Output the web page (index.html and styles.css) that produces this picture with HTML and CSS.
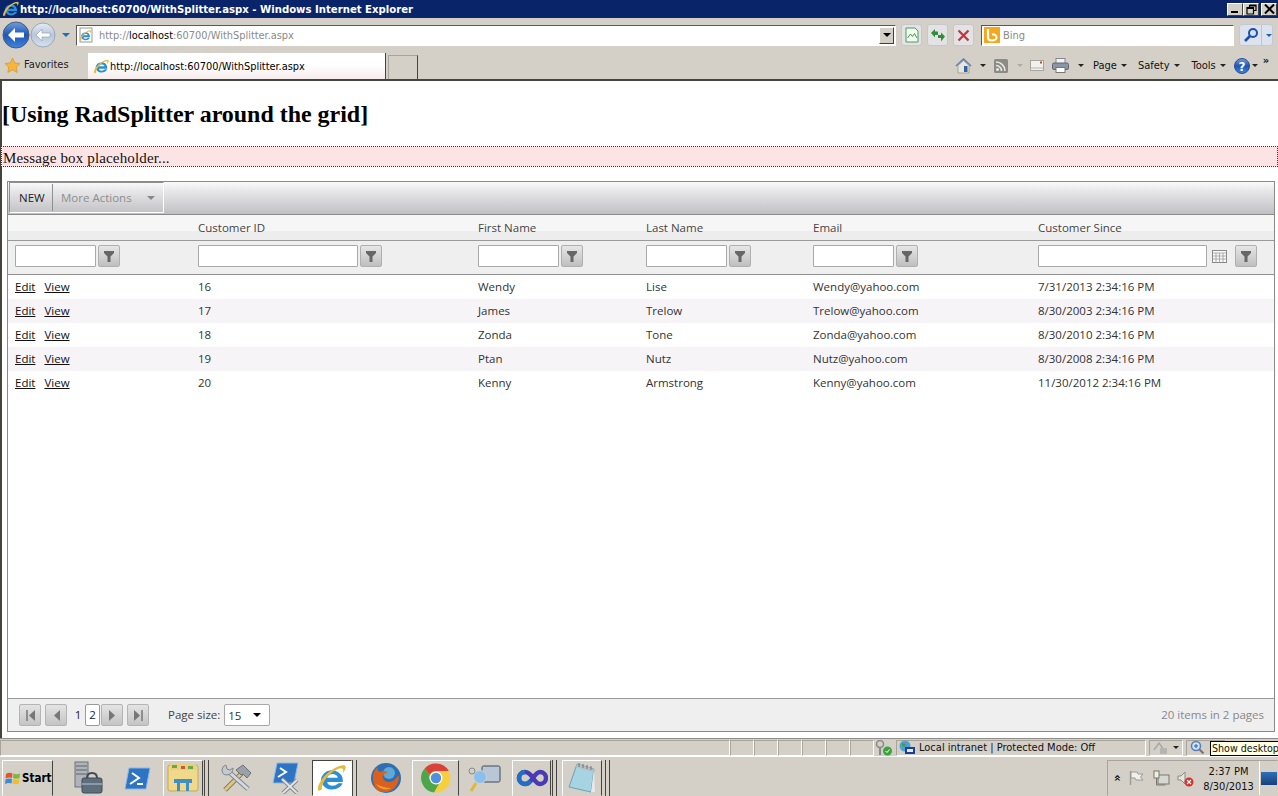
FILE: index.html
```html
<!DOCTYPE html>
<html lang="en">
<head>
  <meta charset="UTF-8">
  <title>WithSplitter</title>
  <link rel="stylesheet" href="styles.css">
</head>
<body>
  <svg class="defs" width="0" height="0">
    <defs>
      <linearGradient id="blueBall" x1="0" y1="0" x2="0" y2="1"><stop offset="0" stop-color="#6f9fe0"/><stop offset="0.5" stop-color="#1f55b5"/><stop offset="1" stop-color="#3f86dc"/></linearGradient>
      <linearGradient id="greyBall" x1="0" y1="0" x2="0" y2="1"><stop offset="0" stop-color="#e6ebf2"/><stop offset="0.5" stop-color="#b9c6da"/><stop offset="1" stop-color="#d7e2ef"/></linearGradient>
      <symbol id="ie" viewBox="0 0 20 20">
        <path d="M3 11.500a7 7 0 0 1 13.600-1.600l.2 2.600H7c.2 2.600 4.600 3.300 7 .8h2.600c-2 5-10.800 5.500-13-.4z M7 9.800h6.600c-.5-3-6-3-6.600 0z" fill="#2b8fd8" fill-rule="evenodd"/>
        <path d="M1.500 18c-1.500-3 3-10 9-13.500 4-2.400 7.500-3.300 8-1.700.4 1.300-1 3.200-2 4.500.5-1.500 1-3-.3-3.300-2-.4-7 2.500-10 6.500-2.200 3-3 5.800-2.300 6.500-.8.500-2 .8-2.400 1z" fill="#e4b93c"/>
      </symbol>
      <symbol id="funnel" viewBox="0 0 10 11">
        <path d="M0 0h10v2L6.500 5.500V11h-3V5.500L0 2z" fill="#666"/>
      </symbol>
    </defs>
  </svg>

  <header class="chrome">
    <div class="titlebar">
      <svg class="title-ie" width="18" height="18"><use href="#ie"/></svg>
      <span class="title-text">http://localhost:60700/WithSplitter.aspx - Windows Internet Explorer</span>
      <div class="win-btns">
        <span class="win-btn"><i class="min-glyph"></i></span>
        <span class="win-btn"><svg width="11" height="11" viewBox="0 0 11 11"><path d="M3.500 1h6.500v5.500H8M3.500 1v2M1 3.500h6.500v6.500H1z M1 4.500h6.500 M3.500 2h6.500" fill="none" stroke="#000" stroke-width="1.200"/></svg></span>
        <span class="win-btn win-btn-x"><svg width="11" height="10" viewBox="0 0 11 10"><path d="M1 .5l9 9M10 .5l-9 9" stroke="#000" stroke-width="2"/></svg></span>
      </div>
    </div>

    <div class="navbar">
      <svg class="nav-balls" width="72" height="30" viewBox="0 0 72 30">
        <circle cx="42" cy="15" r="12" fill="url(#greyBall)" stroke="#9aa7b8"/>
        <path d="M35 15l6-6v4h8v4h-8v4z" fill="#fff" stroke="#8fa0b8" stroke-width=".7"/>
        <circle cx="15" cy="15" r="13" fill="url(#blueBall)" stroke="#4a5a78"/>
        <path d="M7 15l7-7v4.500h9v5h-9V22z" fill="#fff"/>
        <path d="M61 13h8l-4 4z" fill="#1f6fb5"/>
      </svg>
      <div class="address">
        <svg class="addr-icon" width="16" height="16"><rect x="2" y="1" width="12" height="14" fill="#fff" stroke="#999"/><use href="#ie" x="1" y="2" width="13" height="13"/></svg>
        <span class="addr-url">http://<b>localhost</b>:60700/WithSplitter.aspx</span>
        <span class="addr-drop"><i class="tri"></i></span>
      </div>
      <span class="nav-btn"><svg width="14" height="16" viewBox="0 0 14 16"><path d="M1 1h9l3 3v11H1z" fill="#f4fbf2" stroke="#4d9a55"/><path d="M2.500 11l3-4 2 2.500 2-3 2.500 4.500" fill="none" stroke="#3e9a4a"/></svg></span>
      <span class="nav-btn"><svg width="16" height="14" viewBox="0 0 16 14"><path d="M1 5l4-4v2.500h3V7H5v2.500z" fill="#2f8f35"/><path d="M15 8l-4-4v2.500H8v3h3V13z" fill="#2f8f35" transform="translate(0 .5)"/></svg></span>
      <span class="nav-btn"><svg width="13" height="13" viewBox="0 0 13 13"><path d="M1.500 1.500l10 10M11.500 1.500l-10 10" stroke="#c8373f" stroke-width="2.400"/></svg></span>
      <div class="search">
        <svg class="bing" width="16" height="16" viewBox="0 0 16 16"><rect width="16" height="16" fill="#f4a81c"/><path d="M4 2v8.500c0 2 2 3 4 3s4.500-1.200 4.500-3.300S10 7 8 7.500" fill="none" stroke="#fff" stroke-width="2.200"/></svg>
        <span class="search-text">Bing</span>
      </div>
      <span class="search-go">
        <svg width="16" height="16" viewBox="0 0 16 16"><circle cx="10" cy="6" r="4" fill="#cfe2fa" stroke="#1d4fa8" stroke-width="2"/><path d="M7 9l-5 5" stroke="#1d4fa8" stroke-width="2.600"/></svg>
        <i class="search-sep"></i>
        <i class="tri tri-blue"></i>
      </span>
    </div>

    <div class="tabbar">
      <svg class="star" width="17" height="17" viewBox="0 0 17 17"><path d="M8.500 1l2.300 4.900 5.200.7-3.800 3.600 1 5.300-4.700-2.600-4.700 2.600 1-5.300L1 6.600l5.200-.7z" fill="#f4b73a" stroke="#d8912a" stroke-width=".7"/></svg>
      <span class="fav-label">Favorites</span>
      <div class="tab">
        <svg width="17" height="17"><use href="#ie"/></svg>
        <span>http://localhost:60700/WithSplitter.aspx</span>
      </div>
      <div class="tab-new"></div>
      <div class="cmdbar">
        <svg class="cmd-home" width="17" height="17" viewBox="0 0 17 17"><path d="M1 9l7.500-7L16 9" fill="none" stroke="#5d7fae" stroke-width="1.600"/><path d="M3 8.500V16h11V8.500L8.500 3.500z" fill="#e8e6dc" stroke="#8a8a80" stroke-width=".7"/><rect x="9" y="9" width="3.500" height="6" fill="#2f62a8"/></svg>
        <i class="tri tri-s cmd-t1"></i>
        <svg class="cmd-rss" width="14" height="14" viewBox="0 0 14 14"><rect width="14" height="14" rx="1.500" fill="#8b8b85"/><circle cx="3.500" cy="10.500" r="1.500" fill="#e8e8e2"/><path d="M2 6.500a5.500 5.500 0 0 1 5.500 5.500M2 3a9 9 0 0 1 9 9" fill="none" stroke="#e8e8e2" stroke-width="1.600"/></svg>
        <i class="tri tri-s tri-faint cmd-t2"></i>
        <svg class="cmd-mail" width="14" height="11" viewBox="0 0 14 11"><rect x=".5" y=".5" width="13" height="10" fill="#f1f0ec" stroke="#a5a5a0"/><path d="M1 8h12" stroke="#b5b5b0"/><rect x="10" y="1.500" width="2" height="2" fill="#b5474a"/></svg>
        <svg class="cmd-print" width="17" height="15" viewBox="0 0 17 15"><rect x="4" y="0.500" width="9" height="6" fill="#f3f3f3" stroke="#888"/><rect x=".5" y="5" width="16" height="6.500" rx="1.500" fill="#8c95a3" stroke="#5f6772"/><rect x="4" y="9.500" width="9" height="5" fill="#fff" stroke="#777"/></svg>
        <i class="tri tri-s cmd-t3"></i>
        <span class="cmd-item cmd-page">Page <i class="tri tri-s"></i></span>
        <span class="cmd-item cmd-safety">Safety <i class="tri tri-s"></i></span>
        <span class="cmd-item cmd-tools">Tools <i class="tri tri-s"></i></span>
        <svg class="cmd-help" width="16" height="16" viewBox="0 0 16 16"><circle cx="8" cy="8" r="7.500" fill="url(#blueBall)" stroke="#2d4c8e"/><text x="8" y="12.500" text-anchor="middle" class="help-q">?</text></svg>
        <i class="tri tri-s cmd-t4"></i>
        <span class="cmd-more">»</span>
      </div>
    </div>
  </header>

  <main class="page">
    <h2 class="page-title">[Using RadSplitter around the grid]</h2>
    <div class="msgbox">Message box placeholder...</div>

    <section class="grid">
      <div class="grid-toolbar">
        <div class="tb-group">
          <span class="tb-new">NEW</span>
          <span class="tb-more">More Actions <i class="tri tri-grey"></i></span>
        </div>
      </div>

      <table class="grid-table">
        <colgroup>
          <col class="c0"><col class="c1"><col class="c2"><col class="c3"><col class="c4"><col class="c5">
        </colgroup>
        <thead>
          <tr class="head-row">
            <th></th><th>Customer ID</th><th>First Name</th><th>Last Name</th><th>Email</th><th>Customer Since</th>
          </tr>
          <tr class="filter-row">
            <td><div class="filter"><span class="f-input f-81"></span><span class="f-btn"><svg width="10" height="11"><use href="#funnel"/></svg></span></div></td>
            <td><div class="filter"><span class="f-input f-160"></span><span class="f-btn"><svg width="10" height="11"><use href="#funnel"/></svg></span></div></td>
            <td><div class="filter"><span class="f-input f-81"></span><span class="f-btn"><svg width="10" height="11"><use href="#funnel"/></svg></span></div></td>
            <td><div class="filter"><span class="f-input f-81"></span><span class="f-btn"><svg width="10" height="11"><use href="#funnel"/></svg></span></div></td>
            <td><div class="filter"><span class="f-input f-81"></span><span class="f-btn"><svg width="10" height="11"><use href="#funnel"/></svg></span></div></td>
            <td><div class="filter"><span class="f-input f-169"></span>
              <svg class="cal" width="15" height="13" viewBox="0 0 15 13"><rect x=".5" y=".5" width="14" height="12" fill="#fafafa" stroke="#8a8a8a"/><path d="M.5 3h14M.5 6h14M.5 9h14M4 3v9M7.500 3v9M11 3v9" stroke="#9a9a9a" stroke-width=".8"/></svg>
              <span class="f-btn"><svg width="10" height="11"><use href="#funnel"/></svg></span></div></td>
          </tr>
        </thead>
        <tbody>
          <tr><td><a href="#">Edit</a><a href="#">View</a></td><td>16</td><td>Wendy</td><td>Lise</td><td>Wendy@yahoo.com</td><td>7/31/2013 2:34:16 PM</td></tr>
          <tr class="alt"><td><a href="#">Edit</a><a href="#">View</a></td><td>17</td><td>James</td><td>Trelow</td><td>Trelow@yahoo.com</td><td>8/30/2003 2:34:16 PM</td></tr>
          <tr><td><a href="#">Edit</a><a href="#">View</a></td><td>18</td><td>Zonda</td><td>Tone</td><td>Zonda@yahoo.com</td><td>8/30/2010 2:34:16 PM</td></tr>
          <tr class="alt"><td><a href="#">Edit</a><a href="#">View</a></td><td>19</td><td>Ptan</td><td>Nutz</td><td>Nutz@yahoo.com</td><td>8/30/2008 2:34:16 PM</td></tr>
          <tr><td><a href="#">Edit</a><a href="#">View</a></td><td>20</td><td>Kenny</td><td>Armstrong</td><td>Kenny@yahoo.com</td><td>11/30/2012 2:34:16 PM</td></tr>
        </tbody>
      </table>

      <div class="pager">
        <span class="p-btn"><svg width="9" height="11" viewBox="0 0 9 11"><path d="M1 0v11" stroke="#777" stroke-width="1.500"/><path d="M9 0v11L3 5.500z" fill="#777"/></svg></span>
        <span class="p-btn"><svg width="7" height="11" viewBox="0 0 7 11"><path d="M7 0v11L1 5.500z" fill="#777"/></svg></span>
        <span class="p-num">1</span>
        <span class="p-num p-cur">2</span>
        <span class="p-btn p-next"><svg width="7" height="11" viewBox="0 0 7 11"><path d="M0 0v11l6-5.500z" fill="#777"/></svg></span>
        <span class="p-btn"><svg width="9" height="11" viewBox="0 0 9 11"><path d="M0 0v11l6-5.500z" fill="#777"/><path d="M8 0v11" stroke="#777" stroke-width="1.500"/></svg></span>
        <span class="p-size-label">Page size:</span>
        <span class="p-select">15<i class="tri"></i></span>
        <span class="p-info">20 items in 2 pages</span>
      </div>
    </section>
  </main>

  <div class="statusbar">
    <span class="st-cell st-spacer"></span>
    <span class="st-cell st-s"></span><span class="st-cell st-s"></span><span class="st-cell st-s"></span><span class="st-cell st-s"></span><span class="st-cell st-s"></span><span class="st-cell st-s"></span>
    <svg class="st-key" width="18" height="16" viewBox="0 0 18 16"><circle cx="5" cy="4" r="3.500" fill="none" stroke="#888" stroke-width="1.500"/><path d="M5 7v8" stroke="#888" stroke-width="2"/><circle cx="12.500" cy="11" r="4.500" fill="#3aa53a"/><path d="M10.500 11l1.500 1.500 2.500-3" fill="none" stroke="#fff"/></svg>
    <span class="st-cell st-zone">
      <svg width="17" height="16" viewBox="0 0 17 16"><circle cx="6" cy="6" r="5.500" fill="#4fa0d8"/><path d="M3 3l4 1-1 3-3-1z" fill="#4c9a4a"/><rect x="6" y="7" width="10" height="7" fill="#1f3f90"/><rect x="8" y="9" width="6" height="3" fill="#dfe8f4"/></svg>
      Local intranet | Protected Mode: Off
    </span>
    <span class="st-cell st-lock">
      <svg width="16" height="14" viewBox="0 0 16 14"><path d="M1 9l5-7 5 7" fill="none" stroke="#a8a8a8" stroke-width="1.500"/><rect x="7" y="7" width="7" height="6" fill="#b5b5b0"/></svg>
      <i class="tri tri-s"></i>
    </span>
    <span class="st-cell st-zoom">
      <svg width="15" height="15" viewBox="0 0 15 15"><circle cx="6" cy="6" r="4.500" fill="#cfe2fa" stroke="#4f7fbf" stroke-width="1.500"/><path d="M4 6h4M6 4v4" stroke="#2a5fa8"/><path d="M9.500 9.500l4 4" stroke="#7a7468" stroke-width="2"/></svg>
    </span>
    <span class="tooltip">Show desktop</span>
  </div>

  <footer class="taskbar">
    <span class="start">
      <svg width="16" height="15" viewBox="0 0 16 15"><path d="M1 3q3-2 6.500-.5L7 7Q4 6 .5 7.500z" fill="#e2552c"/><path d="M8.500 2.500q3 1.300 6.500 0L14.500 7q-3.500 1.300-6.500 0z" fill="#7cb83c"/><path d="M.5 8.500Q4 7 7 8l-.5 4.500q-3-1-6.500.500z" fill="#3a8ad8"/><path d="M8 8q3 1.300 6.500 0L14 12.500q-3.500 1.300-6.500 0z" fill="#f2bd2c"/></svg>
      <b>Start</b>
    </span>

    <span class="task t-server">
      <svg width="30" height="34" viewBox="0 0 30 34"><rect x="2" y="1" width="13" height="25" fill="#aeb4ba" stroke="#6d7378"/><path d="M3 5h11M3 9h11M3 13h11" stroke="#5d6368"/><rect x="9" y="17" width="20" height="15" rx="2" fill="#5e6e7c" stroke="#3e4a55"/><path d="M14 17q0-5 5-5t5 5" fill="none" stroke="#3e4a55" stroke-width="2"/><path d="M9 23h20" stroke="#8c9aa6" stroke-width="2"/></svg>
    </span>
    <span class="task t-ps">
      <svg width="27" height="23" viewBox="0 0 27 23"><path d="M5 1h21l-4 21H1z" fill="#2d74c4" stroke="#8cb8e4"/><path d="M8 6l7 5-9 6M13 17h6" fill="none" stroke="#fff" stroke-width="2"/></svg>
    </span>
    <span class="task t-folder t-open">
      <svg width="32" height="30" viewBox="0 0 32 30"><rect x="1" y="2" width="30" height="26" rx="2" fill="#f0d98a" stroke="#c8a850"/><rect x="3" y="1" width="26" height="6" fill="#e9cf7e"/><rect x="5" y="2" width="5" height="3" fill="#6aa84f"/><rect x="14" y="3" width="4" height="3" fill="#c65b3a"/><rect x="21" y="3" width="5" height="3" fill="#6aa84f"/><rect x="7" y="16" width="18" height="4" fill="#3f90c4"/><rect x="10" y="20" width="3" height="8" fill="#3f90c4"/><rect x="19" y="20" width="3" height="8" fill="#3f90c4"/></svg>
    </span>
    <i class="grip"></i>
    <span class="task t-tools">
      <svg width="31" height="28" viewBox="0 0 31 28"><path d="M4 26L21 9" stroke="#8f7d45" stroke-width="5"/><path d="M4 26L21 9" stroke="#d8c68c" stroke-width="3"/><path d="M15 6l7-5 8 8-4 5-4-4-2 1z" fill="#9aa2a8" stroke="#6a7278"/><path d="M8 8l19 17" stroke="#7f878d" stroke-width="5"/><path d="M8 8l19 17" stroke="#d4d9dd" stroke-width="3"/><path d="M1 6q0-4 4-5l1 4 3 1 3-2q0 6-6 7Q1 11 1 6z" fill="#c4cbd0" stroke="#7f878d"/></svg>
    </span>
    <span class="task t-pstool">
      <svg width="30" height="32" viewBox="0 0 30 32"><path d="M6 1h21l-4 20H2z" fill="#2d74c4" stroke="#8cb8e4"/><path d="M9 6l6 4-8 5" fill="none" stroke="#fff" stroke-width="2"/><path d="M11 17l15 14M26 18L12 31" stroke="#7f878d" stroke-width="4"/><path d="M11 17l15 14M26 18L12 31" stroke="#dfe3e6" stroke-width="2"/></svg>
    </span>
    <span class="task t-ie t-active">
      <svg width="32" height="32"><use href="#ie"/></svg>
    </span>
    <i class="grip grip-2"></i>
    <span class="task t-ff">
      <svg width="32" height="32" viewBox="0 0 32 32"><circle cx="16" cy="16" r="15" fill="#2d6fb0"/><circle cx="19" cy="11" r="6" fill="#5fa8d8"/><path d="M3 18c-1-6 2-11 5-13-1 3 0 4 2 5 3-2 6-1 8 1-4 0-6 2-5 5 1 4 6 5 10 3 3-2 4-5 6-5 0 9-6 16-14 16S4 26 3 18z" fill="#d9601e"/><path d="M6 22c3 5 10 7 15 4-6 0-11-2-15-4z" fill="#f0a030"/></svg>
    </span>
    <span class="task t-chrome t-open">
      <svg width="30" height="30" viewBox="0 0 30 30"><circle cx="15" cy="15" r="14.500" fill="#f6cf3d"/><path d="M15 .5A14.500 14.500 0 0 1 27.800 8H15a7 7 0 0 0-6.300 4L3.700 5.500A14.500 14.500 0 0 1 15 .5z" fill="#d9423a"/><path d="M3.700 5.500A14.500 14.500 0 0 0 13 29.400l5-8.800a7 7 0 0 1-9.300-8.600z" fill="#4ca64a"/><circle cx="15" cy="15" r="6.500" fill="#fff"/><circle cx="15" cy="15" r="5.200" fill="#4f8fdc"/></svg>
    </span>
    <span class="task t-mag">
      <svg width="33" height="30" viewBox="0 0 33 30"><rect x="14" y="3" width="18" height="16" rx="1.500" fill="#b9c6d6" stroke="#3d4a58"/><circle cx="12" cy="14" r="6.500" fill="#8cc0ea" stroke="#c6d4e0"/><circle cx="4" cy="8" r="3" fill="none" stroke="#888"/><path d="M8 20l-5 8" stroke="#e0b838" stroke-width="3"/></svg>
    </span>
    <span class="task t-vs t-open">
      <svg width="32" height="18" viewBox="0 0 32 18"><path d="M9 3c4 0 6 3 8 6s4 6 7 6a6 6 0 0 0 0-12c-3 0-5 3-7 6s-4 6-8 6A6 6 0 0 1 9 3z" fill="none" stroke="#4a3ab4" stroke-width="4.500"/><path d="M9 3a6 6 0 0 0 0 12c2 0 4-1 5.500-3" fill="none" stroke="#1f6fc4" stroke-width="4.500"/></svg>
    </span>
    <i class="grip"></i>
    <span class="task t-note t-open">
      <svg width="30" height="32" viewBox="0 0 30 32"><path d="M10 2l17 5-3 23L2 25z" fill="#a6d4e2" stroke="#6aa2b8"/><path d="M10 2l17 5-1 3L9 5z" fill="#b9bec0"/><path d="M12 1v4M16 2v4M20 3v4M24 4v4" stroke="#6f7578"/><path d="M24 30l3-23 1 23z" fill="#e8eaea"/></svg>
    </span>
    <i class="grip grip-3"></i>

    <div class="tray">
      <span class="tray-up">»</span>
      <svg class="tray-flag" width="15" height="16" viewBox="0 0 15 16"><path d="M1.500 1v14" stroke="#9a9a94" stroke-width="1.400"/><path d="M2 2h6l1 2h5l-2.500 3 2.500 3H7L6 8H2z" fill="#f0efea" stroke="#9a9a94"/></svg>
      <svg class="tray-net" width="17" height="17" viewBox="0 0 17 17"><rect x="5" y="5" width="11" height="9" fill="#d8d8d2" stroke="#77776f"/><rect x="1" y="1" width="5" height="7" fill="#efefe8" stroke="#77776f"/><path d="M3.500 8v7h9" fill="none" stroke="#77776f"/></svg>
      <svg class="tray-vol" width="17" height="17" viewBox="0 0 17 17"><path d="M1 6h3l4-4v12l-4-4H1z" fill="#e6e6df" stroke="#8a8a84"/><circle cx="12" cy="12" r="4.500" fill="#d8302c"/><path d="M10 10l4 4M14 10l-4 4" stroke="#fff" stroke-width="1.200"/></svg>
      <span class="clock">2:37 PM<br>8/30/2013</span>
      <span class="show-desk"><i></i></span>
    </div>
  </footer>
</body>
</html>
```

FILE: styles.css
```css
/* Base */
*, *::before, *::after {
  box-sizing: border-box;
}
html, body {
  height: 100%;
}
body {
  margin: 0;
  width: 1278px;
  height: 796px;
  overflow: hidden;
  display: flex;
  flex-direction: column;
  background: #fff;
  font-family: "DejaVu Sans Condensed", "DejaVu Sans", sans-serif;
  font-size: 11px;
  position: relative;
}
.defs {
  position: absolute;
}
svg {
  flex: none;
  display: block;
}
i {
  display: block;
}
/* little dropdown triangle */
.tri {
  width: 0;
  height: 0;
  border-style: solid;
  border-width: 4px 4.5px 0;
  border-color: #000 transparent transparent;
}
.tri-s {
  border-width: 3px 3.5px 0;
  border-top-color: #222;
}
.tri-faint {
  border-top-color: #aaa;
}
.tri-blue {
  border-top-color: #1f5fb0;
  border-width: 3px 3.5px 0;
}
.tri-grey {
  display: inline-block;
  border-top-color: #888;
  margin-left: 12px;
  vertical-align: 2px;
}

/* IE window chrome */
.chrome {
  flex: none;
  height: 81px;
  background: #d4d0c8;
  border-bottom: 2px solid #45433e;
}
.titlebar {
  height: 18px;
  background: #0a246a;
  display: flex;
  align-items: center;
  color: #fff;
  font-weight: bold;
  font-size: 11.25px;
}
.title-ie {
  margin-left: 2px;
}
.title-text {
  flex: 1;
  white-space: nowrap;
}
.win-btns {
  display: flex;
  gap: 0;
  margin-right: 1px;
}
.win-btn {
  width: 16px;
  height: 13px;
  background: #d4d0c8;
  border: 1px solid #fff;
  border-right-color: #404040;
  border-bottom-color: #404040;
  display: flex;
  align-items: center;
  justify-content: center;
}
.win-btn-x {
  margin-left: 2px;
}
.min-glyph {
  width: 7px;
  height: 2px;
  background: #000;
  margin-top: 6px;
  margin-right: 2px;
}
.navbar {
  height: 34px;
  display: flex;
  align-items: center;
  position: relative;
  padding-left: 1px;
}
.nav-balls {
  margin-right: 3px;
}
.address {
  width: 820px;
  height: 21px;
  background: #fff;
  border: 1px solid;
  border-color: #5a5a55 #fff #fff #5a5a55;
  display: flex;
  align-items: center;
  padding-left: 1px;
  color: #8a8a8a;
}
.addr-icon {
  margin-right: 5px;
}
.addr-url {
  flex: 1;
  font-size: 10.9px;
}
.addr-url b {
  font-weight: normal;
  color: #000;
}
.addr-drop {
  width: 15px;
  height: 17px;
  margin-right: 1px;
  background: #d4d0c8;
  border: 1px solid;
  border-color: #fff #404040 #404040 #fff;
  display: flex;
  align-items: center;
  justify-content: center;
}
.nav-btn {
  width: 21px;
  height: 22px;
  margin-left: 5px;
  background: #e3e3e6;
  border: 1px solid #c6c6cc;
  border-radius: 3px;
  display: flex;
  align-items: center;
  justify-content: center;
}
.search {
  width: 253px;
  height: 21px;
  margin-left: 7px;
  background: #fff;
  border: 1px solid;
  border-color: #5a5a55 #fff #fff #5a5a55;
  display: flex;
  align-items: center;
  padding-left: 2px;
  color: #8a8a8a;
}
.bing {
  margin-right: 3px;
}
.search-go {
  width: 34px;
  height: 22px;
  margin-left: 5px;
  background: #dde3ee;
  border: 1px solid #c6c8d0;
  border-radius: 3px;
  display: flex;
  align-items: center;
  padding-left: 3px;
}
.search-sep {
  width: 1px;
  height: 20px;
  background: #c0c4d0;
  margin: 0 4px 0 2px;
}
.tabbar {
  height: 27px;
  display: flex;
  align-items: flex-end;
  position: relative;
}
.star {
  align-self: center;
  margin: 0 3px 0 4px;
}
.fav-label {
  align-self: center;
  width: 64px;
  margin-top: -2px;
  color: #222;
}
.tab {
  width: 298px;
  height: 26px;
  background: linear-gradient(#fff 0, #fff 45%, #f6ecec 100%);
  border-right: 1px solid #45433e;
  display: flex;
  align-items: center;
  padding-left: 5px;
  font-size: 10.9px;
  color: #000;
}
.tab-new {
  width: 30px;
  height: 24px;
  margin-left: 2px;
  border: 1px solid #a8a49c;
  border-bottom: 0;
  border-right: 1px solid #45433e;
  background: #d4d0c8;
}
.cmdbar {
  flex: 1;
  height: 27px;
  display: flex;
  align-items: center;
  color: #111;
  position: relative;
}
.cmd-home {
  margin-left: 537px;
}
.cmd-t1 {
  margin-left: 8px;
}
.cmd-rss {
  margin-left: 8px;
}
.cmd-t2 {
  margin-left: 9px;
}
.cmd-mail {
  margin-left: 7px;
}
.cmd-print {
  margin-left: 8px;
}
.cmd-t3 {
  margin-left: 9px;
}
.cmd-item {
  display: flex;
  align-items: center;
  gap: 4px;
}
.cmd-page {
  margin-left: 9px;
}
.cmd-safety {
  margin-left: 11px;
}
.cmd-tools {
  margin-left: 12px;
}
.cmd-help {
  margin-left: 8px;
}
.cmd-t4 {
  margin-left: 2px;
}
.cmd-more {
  margin-left: 5px;
  margin-top: -10px;
  font-weight: bold;
}
.help-q {
  font: bold 12px "DejaVu Sans", sans-serif;
  fill: #fff;
}

/* Page content */
.page {
  flex: none;
  height: 657px;
  border-left: 2px solid #45433e;
  display: flex;
  flex-direction: column;
  font-family: "Liberation Serif", serif;
  background: #fff;
}
.page-title {
  margin: 0 0 0 -1px;
  padding: 19px 0 0 1px;
  height: 65px;
  font-size: 24px;
  line-height: 28px;
  font-weight: bold;
  letter-spacing: -0.03px;
  color: #000;
}
.msgbox {
  height: 21px;
  margin-left: -1px;
  padding: 2px 0 0 1px;
  background: #fde4e4;
  border: 1px dotted #8a1030;
  font-size: 15px;
  line-height: 18px;
  letter-spacing: 0.15px;
  color: #111;
}

/* Grid */
.grid {
  flex: none;
  height: 551px;
  margin: 14px 3px 0 5px;
  border: 1px solid #8a8a8a;
  display: flex;
  flex-direction: column;
  font-family: "Open Sans", sans-serif;
  font-size: 11.5px;
  color: #333;
}
.grid-toolbar {
  flex: none;
  height: 33px;
  background: linear-gradient(#fafafa 0, #e6e6e8 30%, #c0c0c4 100%);
  border-bottom: 1px solid #8a8a8a;
}
.tb-group {
  width: 155px;
  height: 31px;
  margin: 0 0 0 1px;
  border: 1px solid #8f8f8f;
  border-right-color: #fff;
  border-bottom-color: #fff;
  display: flex;
  align-items: center;
}
.tb-new {
  width: 43px;
  padding-left: 9px;
  color: #222;
  border-right: 1px solid #8f8f8f;
  line-height: 27px;
}
.tb-more {
  padding-left: 8px;
  color: #8e8e8e;
}
.grid-table {
  flex: none;
  width: 100%;
  table-layout: fixed;
  border-collapse: separate;
  border-spacing: 0;
}
.c0 { width: 183px; }
.c1 { width: 280px; }
.c2 { width: 168px; }
.c3 { width: 167px; }
.c4 { width: 225px; }
.grid-table th,
.grid-table td {
  padding: 0 0 0 7px;
  text-align: left;
  font-weight: normal;
  white-space: nowrap;
}
.head-row th {
  height: 26px;
  background: linear-gradient(#f6f6f6 0, #f6f6f6 65%, #ededed 65%, #ededed 100%);
  border-bottom: 1px solid #9a9a9a;
  color: #444;
  padding-bottom: 1px;
}
.grid-table .filter-row td {
  height: 34px;
  padding-bottom: 3px;
  background: #efefef;
  border-bottom: 1px solid #8f8f8f;
}
.filter {
  display: flex;
  align-items: center;
  gap: 2px;
}
.f-input {
  height: 22px;
  background: #fff;
  border: 1px solid #a8a8a8;
  border-radius: 1px;
}
.f-81 { width: 81px; }
.f-160 { width: 160px; }
.f-169 { width: 169px; }
.f-btn {
  width: 22px;
  height: 22px;
  background: linear-gradient(#e6e6e6, #bfbfbf);
  border: 1px solid #b0b0b0;
  border-radius: 2px;
  display: flex;
  align-items: center;
  justify-content: center;
}
.cal {
  margin: 0 6px 0 3px;
}
.grid-table tbody td {
  height: 24px;
  padding-bottom: 2px;
  color: #333;
}
.grid-table tbody tr.alt td {
  background: #f7f4f8;
}
.grid-table a {
  color: #111;
  margin-right: 9px;
}
.pager {
  flex: none;
  height: 33px;
  margin-top: auto;
  background: #efefef;
  border-top: 1px solid #9a9a9a;
  display: flex;
  align-items: center;
  padding: 0 10px 0 11px;
}
.p-btn {
  width: 22px;
  height: 22px;
  margin-right: 4px;
  background: linear-gradient(#e4e4e4, #c4c4c4);
  border: 1px solid #b4b4b4;
  border-radius: 2px;
  display: flex;
  align-items: center;
  justify-content: center;
}
.p-num {
  width: 14px;
  height: 22px;
  line-height: 20px;
  text-align: center;
  border: 1px solid transparent;
  color: #222;
}
.p-cur {
  width: 15px;
  background: #fff;
  border-color: #9a9a9a;
  border-radius: 2px;
}
.p-next {
  margin-left: 1px;
}
.p-size-label {
  margin-left: 15px;
  padding-bottom: 2px;
  color: #444;
}
.p-select {
  width: 46px;
  height: 22px;
  margin-left: 4px;
  padding: 0 8px 0 3px;
  background: #fff;
  border: 1px solid #a8a8a8;
  border-radius: 2px;
  display: flex;
  align-items: center;
  justify-content: space-between;
}
.p-info {
  margin-left: auto;
  padding-bottom: 2px;
  color: #888;
}

/* Status bar */
.statusbar {
  flex: none;
  height: 18px;
  background: #d4d0c8;
  border-top: 1px solid #8f8d88;
  display: flex;
  align-items: center;
  color: #111;
  position: relative;
}
.st-cell {
  height: 16px;
  border: 1px solid;
  border-color: #a8a49c #fff #fff #a8a49c;
  display: flex;
  align-items: center;
}
.st-spacer {
  width: 730px;
}
.st-s {
  width: 24px;
}
.st-key {
  margin: 0 3px 0 1px;
}
.st-zone {
  width: 250px;
  gap: 3px;
  padding-left: 2px;
  white-space: nowrap;
}
.st-lock {
  width: 34px;
  margin-left: 3px;
  gap: 4px;
  padding-left: 3px;
}
.st-zoom {
  width: 40px;
  margin-left: 3px;
  padding-left: 3px;
}
.tooltip {
  position: absolute;
  left: 1210px;
  top: 2px;
  width: 68px;
  height: 15px;
  line-height: 13px;
  padding-left: 1px;
  background: #ffffe1;
  border: 1px solid #000;
  border-right: 0;
  font-size: 10.6px;
  white-space: nowrap;
  overflow: hidden;
}

/* Task bar */
.taskbar {
  flex: none;
  height: 40px;
  background: #d4d0c8;
  border-top: 1px solid #fff;
  padding-top: 3px;
  display: flex;
  align-items: stretch;
  position: relative;
}
.start {
  width: 51px;
  margin-left: 2px;
  border: 1px solid;
  border-color: #fff #45433e transparent #fff;
  display: flex;
  align-items: center;
  gap: 1px;
  padding-left: 2px;
  font-size: 11.5px;
}
.task {
  display: flex;
  align-items: center;
  justify-content: center;
  height: 36px;
}
.t-open {
  border: 1px solid;
  border-color: #fff #45433e transparent #fff;
}
.t-active {
  background: #fff;
  border: 1px solid;
  border-color: #45433e #fff transparent #45433e;
}
.grip {
  width: 5px;
  border-left: 1px solid #45433e;
  border-right: 1px solid #45433e;
  margin-left: 1px;
}
.grip-2 {
  border-color: #fff #45433e;
  margin-left: 0;
}
.grip-3 {
  margin-left: 3px;
}
.t-server { width: 40px; margin-left: 15px; }
.t-ps { width: 45px; margin-left: 7px; }
.t-folder { width: 40px; margin-left: 3px; }
.t-tools { width: 45px; margin-left: 5px; }
.t-pstool { width: 42px; margin-left: 6px; }
.t-ie { width: 40px; margin-left: 5px; }
.t-ff { width: 44px; margin-left: 7px; }
.t-chrome { width: 47px; margin-left: 4px; }
.t-mag { width: 46px; margin-left: 2px; }
.t-vs { width: 39px; margin-left: 5px; }
.t-note { width: 40px; margin-left: 5px; }
.tray {
  width: 171px;
  margin-left: auto;
  border: 1px solid;
  border-color: #a8a49c transparent transparent #a8a49c;
  display: flex;
  align-items: center;
  color: #111;
}
.tray-up {
  width: 12px;
  margin-left: 3px;
  text-align: center;
  transform: rotate(-90deg);
  font-weight: bold;
  font-size: 12px;
}
.tray-flag { margin-left: 6px; }
.tray-net { margin-left: 9px; }
.tray-vol { margin-left: 7px; }
.clock {
  width: 62px;
  margin-left: 4px;
  padding-top: 1px;
  text-align: center;
  line-height: 15px;
}
.show-desk {
  width: 18px;
  height: 100%;
  border-left: 1px solid #fff;
  display: flex;
  align-items: center;
  justify-content: center;
}
.show-desk i {
  width: 16px;
  height: 13px;
  background: linear-gradient(#2f6fb8, #1a3f7a);
}
```
